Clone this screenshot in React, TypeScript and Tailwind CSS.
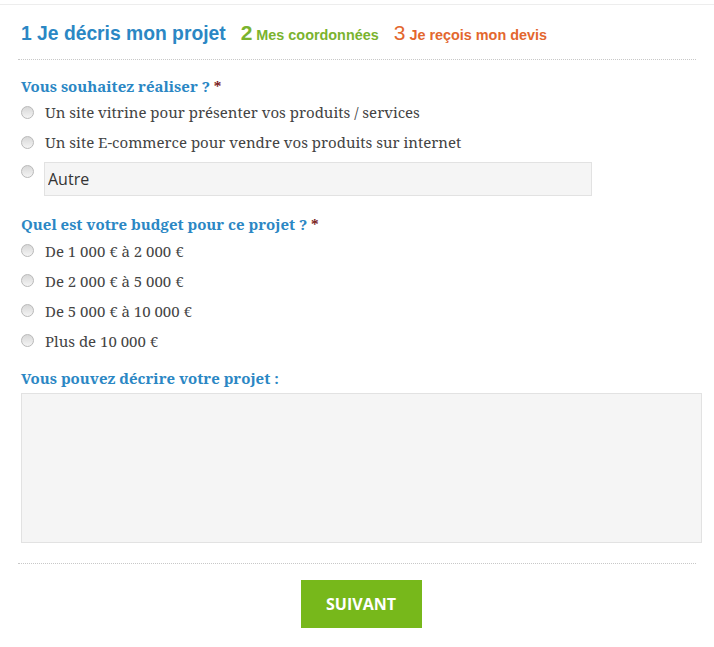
import React from 'react';

const serif = "font-['Noto_Serif','DejaVu_Serif',serif]";

function Radio() {
  return (
    <span className="block w-[13px] h-[13px] rounded-full border border-[#b9b9b9] bg-gradient-to-b from-[#d8d8d8] to-[#f4f4f4] shrink-0" />
  );
}

function Option({ label }: { label: string }) {
  return (
    <label className="flex items-center h-[30px] gap-[11px] pl-[21px]">
      <Radio />
      <span className="text-[15px] text-[#444]">{label}</span>
    </label>
  );
}

function Question({ children }: { children: React.ReactNode }) {
  return (
    <p className="pl-[21px] text-[15px] font-bold text-[#2b87c4]">
      {children} <span className="text-[#7a1c1c]">*</span>
    </p>
  );
}

export default function App() {
  return (
    <div className={`w-[714px] h-[647px] bg-white ${serif}`}>
      <div className="h-[5px] border-b border-[#ededed]" />

      {/* Steps */}
      <div className="flex items-baseline gap-[15px] pl-[21px] pt-[12px] pb-[10px] font-['Liberation_Sans',Arial,sans-serif] font-bold">
        <span className="text-[#2b87c4] text-[19.3px]">1 Je décris mon projet</span>
        <span className="text-[#7ab32e] text-[14.4px]">
          <span className="text-[21px] mr-[4px]">2</span>Mes coordonnées
        </span>
        <span className="text-[#e3672e] text-[14.4px]">
          <span className="text-[21px] font-normal mr-[4px]">3</span>Je reçois mon devis
        </span>
      </div>
      <div className="mx-[18px] border-t border-dotted border-[#c8c8c8]" />

      <div className="pt-[15px]">
        <Question>Vous souhaitez réaliser ?</Question>
        <div>
          <Option label="Un site vitrine pour présenter vos produits / services" />
          <Option label="Un site E-commerce pour vendre vos produits sur internet" />
          <div className="flex items-start gap-[10px] pl-[21px] pt-[5px]">
            <span className="mt-[3px]"><Radio /></span>
            <input
              defaultValue="Autre"
              className="w-[548px] h-[34px] bg-[#f5f5f5] border border-[#e2e2e2] px-[3px] text-[16px] text-[#333] font-['Open_Sans',sans-serif] outline-none"
            />
          </div>
        </div>
      </div>

      <div className="pt-[17px]">
        <Question>Quel est votre budget pour ce projet ?</Question>
        <div>
          <Option label="De 1 000 € à 2 000 €" />
          <Option label="De 2 000 € à 5 000 €" />
          <Option label="De 5 000 € à 10 000 €" />
          <Option label="Plus de 10 000 €" />
        </div>
      </div>

      <div className="pt-[11px] pl-[21px]">
        <p className="text-[15px] font-bold text-[#2b87c4]">Vous pouvez décrire votre projet :</p>
        <textarea className="block mt-[4px] w-[681px] h-[150px] bg-[#f5f5f5] border border-[#e2e2e2] resize-none outline-none" />
      </div>

      <div className="mx-[18px] mt-[20px] border-t border-dotted border-[#c8c8c8]" />

      <div className="flex justify-center pt-[16px] pl-[8px]">
        <button className="w-[121px] h-[48px] bg-[#77b81b] text-white text-[16px] font-bold font-['Open_Sans',sans-serif]">
          SUIVANT
        </button>
      </div>
    </div>
  );
}
